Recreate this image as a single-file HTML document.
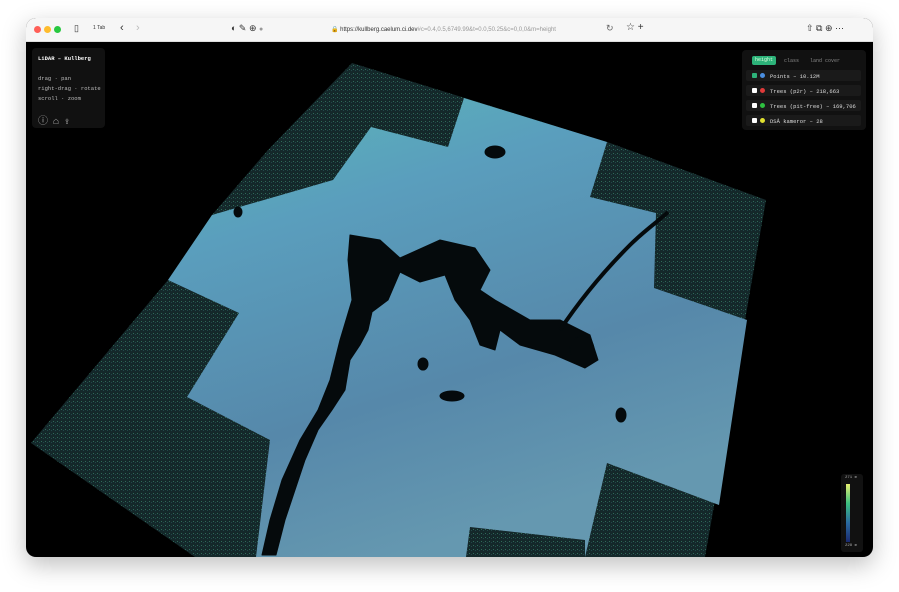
<!DOCTYPE html>
<html><head><style>
body{margin:0;width:899px;height:592px;background:#fff;overflow:hidden;font-family:"Liberation Sans",sans-serif;position:relative}
.win{position:absolute;left:26px;top:18px;width:847px;height:539px;border-radius:10px;background:#000;overflow:hidden;box-shadow:0 8px 24px rgba(0,0,0,.25)}
.tb{position:absolute;left:0;top:0;width:847px;height:23px;background:#f6f6f6;border-bottom:1px solid #ddd}
.dot{position:absolute;top:8px;width:7px;height:7px;border-radius:50%}
.tb span{position:absolute;font-size:7px;color:#333;white-space:nowrap}
.mono{font-family:"Liberation Mono",monospace;white-space:nowrap}
.lp{position:absolute;left:6px;top:30px;width:73px;height:80px;background:#111;border-radius:4px;color:#bbb;font-size:5.5px}
.rp{position:absolute;left:716px;top:32px;width:124px;height:80px;background:#111;border-radius:4px;font-size:5.5px;color:#ddd}
.row{position:absolute;left:4px;width:115px;height:11px;background:#1a1a1a;border-radius:2px}
.row i{position:absolute;top:3px;width:5px;height:5px;border-radius:50%}
.row b{position:absolute;left:24px;top:2.5px;font-weight:normal}
</style></head><body>
<div class="win">
<svg width="847" height="539" style="position:absolute;left:0;top:0">
<defs>
<linearGradient id="lg" x1="0" y1="0" x2="0.4" y2="1">
<stop offset="0" stop-color="#5cb8b8"/><stop offset="0.3" stop-color="#5a9ebd"/><stop offset="0.7" stop-color="#5688aa"/><stop offset="1" stop-color="#6598b0"/></linearGradient>
<pattern id="sp" width="4" height="4" patternUnits="userSpaceOnUse"><rect width="4" height="4" fill="#14282a"/><rect x="1" y="1" width="1" height="1" fill="#2f6a58"/><rect x="3" y="2" width="1" height="1" fill="#22474a"/></pattern>
</defs>
<g transform="translate(-26,-18)">
<polygon fill="url(#sp)" points="352,63 465,98 610,143 766,200 745,320 725,400 715,500 705,557 195,557 31,443 168,280 212,215 268,150"/>
<polygon fill="url(#lg)" points="212,215 333,180 371,127 448,147 464,98 607,142 590,197 656,213 654,288 747,320 719,505 607,463 585,557 256,557 270,440 187,397 239,313 168,280"/>
<polygon fill="url(#sp)" points="470,527 585,540 585,557 466,557"/>
<g fill="#050a0c" stroke="#050a0c" stroke-linejoin="round">
<polygon points="350,235 380,240 400,258 440,240 475,248 490,270 480,290 495,300 530,320 560,320 590,335 598,360 585,368 555,355 520,345 500,330 495,350 480,345 470,320 455,300 445,275 420,282 400,272 388,300 372,312 368,330 360,345 350,360 345,390 332,410 318,430 305,460 295,490 285,520 276,555 262,555 270,520 282,480 300,440 318,410 330,380 340,340 352,300 348,260"/>
<path d="M560,330 C580,300 605,270 630,245 C645,230 660,220 668,212" stroke-width="4" fill="none"/>
<ellipse cx="495" cy="152" rx="10" ry="6"/>
<ellipse cx="452" cy="396" rx="12" ry="5"/>
<ellipse cx="423" cy="364" rx="5" ry="6"/>
<ellipse cx="621" cy="415" rx="5" ry="7"/>
<ellipse cx="238" cy="212" rx="4" ry="5"/>
<ellipse cx="582" cy="350" rx="12" ry="14"/>
</g>
</g>
</svg>
<div class="tb">
<div class="dot" style="left:8px;background:#ff5f57"></div><div class="dot" style="left:18px;background:#febc2e"></div><div class="dot" style="left:28px;background:#28c840"></div>
<span style="left:48px;top:5px;font-size:9px">▯</span><span style="left:67px;top:7px;font-size:5px">1 Tab</span>
<span style="left:94px;top:4px;font-size:11px">‹</span><span style="left:110px;top:4px;font-size:11px;color:#bbb">›</span>
<span style="left:205px;top:5px;font-size:9px">◐ ✎ ⊕ <span style="position:static;color:#999">●</span></span>
<span style="left:305px;top:8px;font-size:6px">🔒 https://kullberg.caelum.ci.dev<span style="position:static;color:#999;font-size:6px">#c=0.4,0.5,6749.99&amp;t=0.0,50.25&amp;c=0,0,0&amp;m=height</span></span>
<span style="left:580px;top:5px;font-size:9px;color:#666">↻</span><span style="left:600px;top:4px;font-size:10px">☆ +</span>
<span style="left:780px;top:5px;font-size:9px">⇧ ⧉ ⊕ ⋯</span>
</div>
<div class="lp mono">
<div style="position:absolute;left:6px;top:7px;color:#fff;font-weight:bold">LiDAR – Kullberg</div>
<div style="position:absolute;left:6px;top:26px;line-height:10px">drag · pan<br>right-drag · rotate<br>scroll · zoom</div>
<div style="position:absolute;left:6px;top:64px;font-size:10px;color:#aaa;letter-spacing:5px">ⓘ⌂⇪</div>
</div>
<div class="rp mono">
<div style="position:absolute;left:10px;top:6px;width:24px;height:9px;background:#2db37a;border-radius:2px;color:#dfd;text-align:center;font-size:5px;line-height:9px">height</div>
<div style="position:absolute;left:42px;top:8px;color:#888;font-size:5px">class</div>
<div style="position:absolute;left:68px;top:8px;color:#888;font-size:5px">land cover</div>
<div class="row" style="top:20px"><i style="left:6px;background:#2db37a;border-radius:1px"></i><i style="left:14px;background:#4a8ee0"></i><b>Points – 10.12M</b></div>
<div class="row" style="top:35px"><i style="left:6px;background:#fff;border-radius:1px"></i><i style="left:14px;background:#e03a3a"></i><b>Trees (p2r) – 218,663</b></div>
<div class="row" style="top:50px"><i style="left:6px;background:#fff;border-radius:1px"></i><i style="left:14px;background:#2ec040"></i><b>Trees (pit-free) – 169,706</b></div>
<div class="row" style="top:65px"><i style="left:6px;background:#fff;border-radius:1px"></i><i style="left:14px;background:#e0e030"></i><b>DSÅ kameror – 28</b></div>
</div>
<div style="position:absolute;left:815px;top:456px;width:22px;height:78px;background:#111;border-radius:3px">
<div style="position:absolute;left:5px;top:10px;width:4px;height:58px;background:linear-gradient(#e8f070,#3cc080,#2a6aa0,#1a2a70)"></div>
<div class="mono" style="position:absolute;left:4px;top:2px;font-size:4px;color:#aaa">271 m</div>
<div class="mono" style="position:absolute;left:4px;top:70px;font-size:4px;color:#aaa">228 m</div>
</div>
</div>
</body></html>
